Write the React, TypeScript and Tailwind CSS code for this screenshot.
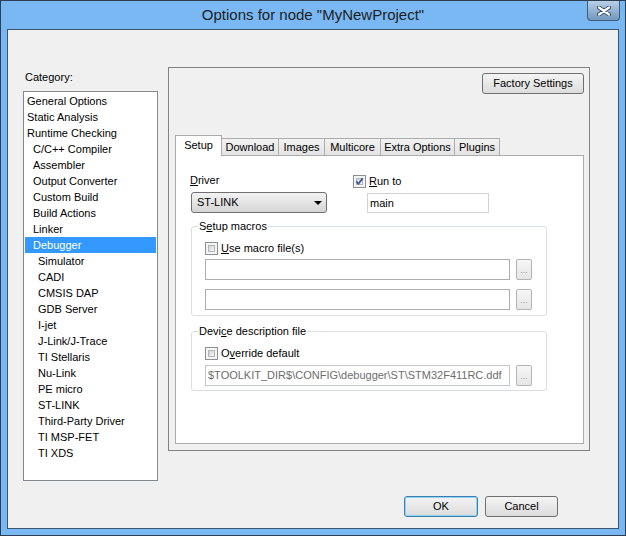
import React from 'react';

const categories: [string, number][] = [
  ['General Options', 0],
  ['Static Analysis', 0],
  ['Runtime Checking', 0],
  ['C/C++ Compiler', 1],
  ['Assembler', 1],
  ['Output Converter', 1],
  ['Custom Build', 1],
  ['Build Actions', 1],
  ['Linker', 1],
  ['Debugger', 1],
  ['Simulator', 2],
  ['CADI', 2],
  ['CMSIS DAP', 2],
  ['GDB Server', 2],
  ['I-jet', 2],
  ['J-Link/J-Trace', 2],
  ['TI Stellaris', 2],
  ['Nu-Link', 2],
  ['PE micro', 2],
  ['ST-LINK', 2],
  ['Third-Party Driver', 2],
  ['TI MSP-FET', 2],
  ['TI XDS', 2],
];

const indent = ['pl-[2px]', 'pl-[8px]', 'pl-[13px]'];

const tabs: [string, string][] = [
  ['Setup', 'w-[47px]'],
  ['Download', 'w-[58px]'],
  ['Images', 'w-[47px]'],
  ['Multicore', 'w-[57px]'],
  ['Extra Options', 'w-[75px]'],
  ['Plugins', 'w-[46px]'],
];

function CheckBox({ checked }: { checked?: boolean }) {
  return (
    <span className="relative flex w-[13px] h-[13px] shrink-0 border border-[#8e8f8f] bg-[#f4f4f4] p-[2px]">
      <span className="flex-1 border border-[#b1b5ba] bg-gradient-to-br from-[#cdd1d6] to-[#f7f7f7]" />
      {checked && (
        <svg className="absolute left-0 top-0" width="11" height="11" viewBox="0 0 11 11">
          <path d="M2.2 5.4 L4.4 7.8 L8.8 2.4" fill="none" stroke="#3d5596" strokeWidth="1.7" />
        </svg>
      )}
    </span>
  );
}

function Browse() {
  return (
    <div className="ml-[6px] w-[16px] h-[21px] rounded-[2px] border border-[#b4b4b4] bg-gradient-to-b from-[#f6f6f6] to-[#e6e6e6] flex items-end justify-center pb-[4px] text-[9px] leading-none text-[#9a9a9a]">
      ...
    </div>
  );
}

function Button({ label, width, focused }: { label: string; width: string; focused?: boolean }) {
  return (
    <div
      className={`${width} h-[21px] rounded-[3px] border flex items-center justify-center bg-gradient-to-b from-[#f4f4f4] to-[#dcdcdc] ${
        focused ? 'border-[#3c7fb1] shadow-[inset_0_0_0_1px_#8fd3f6]' : 'border-[#707070]'
      }`}
    >
      {label}
    </div>
  );
}

export default function App() {
  return (
    <div className="w-[626px] h-[536px] flex flex-col bg-[#79b8f3] border border-[#2c3e55] font-['Liberation_Sans',Arial,sans-serif] text-[11px] leading-[13px] text-black">
      <div className="relative h-[28px] shrink-0 flex items-center justify-center">
        <span className="text-[15px] leading-[18px] text-[#1e1e1e] -mt-[1px]">Options for node "MyNewProject"</span>
        <div className="absolute right-[5px] top-0 w-[33px] h-[20px] rounded-b-[4px] border border-t-0 border-[#3f5d7e] bg-gradient-to-b from-[#b9d0e7] to-[#7397be] flex items-center justify-center">
          <svg width="14" height="10" viewBox="0 0 14 10">
            <path d="M2 1.5 L12 8.5 M12 1.5 L2 8.5" stroke="#2f4866" strokeWidth="4" strokeLinecap="round" />
            <path d="M2 1.5 L12 8.5 M12 1.5 L2 8.5" stroke="#ffffff" strokeWidth="2.2" strokeLinecap="round" />
          </svg>
        </div>
      </div>

      <div className="mx-[6px] mb-[6px] flex-1 flex flex-col border border-[#3d5570] bg-[#f0f0f0]">
        <div className="flex pt-[37px] pl-[15px]">
          <div className="w-[135px] flex flex-col">
            <div className="mt-[4px] ml-[2px]">Category:</div>
            <div className="mt-[7px] h-[390px] border border-[#828790] bg-white pt-[1px] px-[1px]">
              {categories.map(([name, level]) => (
                <div
                  key={name}
                  className={`h-[16px] leading-[16px] ${indent[level]} ${
                    name === 'Debugger' ? 'bg-[#3399ff] text-white' : ''
                  }`}
                >
                  {name}
                </div>
              ))}
            </div>
          </div>

          <div className="ml-[10px] w-[422px] h-[384px] border border-[#828282] flex flex-col">
            <div className="flex justify-end pt-[5px] pr-[5px]">
              <Button label="Factory Settings" width="w-[102px]" />
            </div>

            <div className="relative z-10 mt-[41px] ml-[6px] h-[20px] flex items-end">
              {tabs.map(([name, w], i) =>
                i === 0 ? (
                  <div
                    key={name}
                    className={`${w} relative z-10 h-[21px] -mb-px bg-white border border-b-0 border-[#acacac] flex items-center justify-center pb-[1px]`}
                  >
                    {name}
                  </div>
                ) : (
                  <div
                    key={name}
                    className={`${w} -ml-px h-[17px] bg-gradient-to-b from-[#f2f2f2] to-[#e3e3e3] border border-b-0 border-[#acacac] flex items-center justify-center`}
                  >
                    {name}
                  </div>
                ),
              )}
            </div>

            <div className="flex-1 ml-[6px] mr-[5px] mb-[6px] bg-white border border-[#acacac]">
              <div className="flex pt-[18px] pl-[14px]">
                <div className="flex flex-col">
                  <div>
                    <span className="underline">D</span>river
                  </div>
                  <div className="ml-[1px] mt-[5px] w-[136px] h-[21px] rounded-[3px] border border-[#707070] bg-gradient-to-b from-[#f3f3f3] to-[#d5d5d5] flex items-center justify-between pl-[5px] pr-[4px]">
                    <span>ST-LINK</span>
                    <svg width="8" height="4" viewBox="0 0 8 4">
                      <path d="M0 0 H8 L4 4 Z" fill="#000" />
                    </svg>
                  </div>
                </div>
                <div className="ml-[26px] flex flex-col">
                  <div className="mt-[1px] flex items-center h-[13px]">
                    <CheckBox checked />
                    <span className="ml-[3px]">
                      <span className="underline">R</span>un to
                    </span>
                  </div>
                  <div className="mt-[5px] ml-[14px] w-[122px] h-[20px] border border-[#cfd2d6] bg-white flex items-center pl-[2px]">
                    main
                  </div>
                </div>
              </div>

              <fieldset className="mt-[7px] ml-[15px] w-[356px] border border-[#d5dfe5] rounded-[3px] pl-[13px] pt-[9px] pb-[5px]">
                <legend className="-ml-[7px] px-[1px]">
                  S<span className="underline">e</span>tup macros
                </legend>
                <div className="flex items-center h-[13px]">
                  <CheckBox />
                  <span className="ml-[3px]">
                    <span className="underline">U</span>se macro file(s)
                  </span>
                </div>
                <div className="mt-[4px] flex">
                  <div className="w-[305px] h-[21px] border border-[#abadb3] bg-white" />
                  <Browse />
                </div>
                <div className="mt-[9px] flex">
                  <div className="w-[305px] h-[21px] border border-[#abadb3] bg-white" />
                  <Browse />
                </div>
              </fieldset>

              <fieldset className="mt-[9px] ml-[15px] w-[356px] border border-[#d5dfe5] rounded-[3px] pl-[13px] pt-[9px] pb-[4px]">
                <legend className="-ml-[7px] px-[1px]">
                  Devi<span className="underline">c</span>e description file
                </legend>
                <div className="flex items-center h-[13px]">
                  <CheckBox />
                  <span className="ml-[3px]">
                    O<span className="underline">v</span>erride default
                  </span>
                </div>
                <div className="mt-[5px] flex">
                  <div className="w-[305px] h-[21px] border border-[#c4c6cb] bg-white flex items-center pl-[2px] text-[#6d6d6d] whitespace-nowrap overflow-hidden">
                    $TOOLKIT_DIR$\CONFIG\debugger\ST\STM32F411RC.ddf
                  </div>
                  <Browse />
                </div>
              </fieldset>
            </div>
          </div>
        </div>

        <div className="mt-auto flex justify-end gap-[7px] pr-[60px] pb-[11px]">
          <Button label="OK" width="w-[74px]" focused />
          <Button label="Cancel" width="w-[73px]" />
        </div>
      </div>
    </div>
  );
}
